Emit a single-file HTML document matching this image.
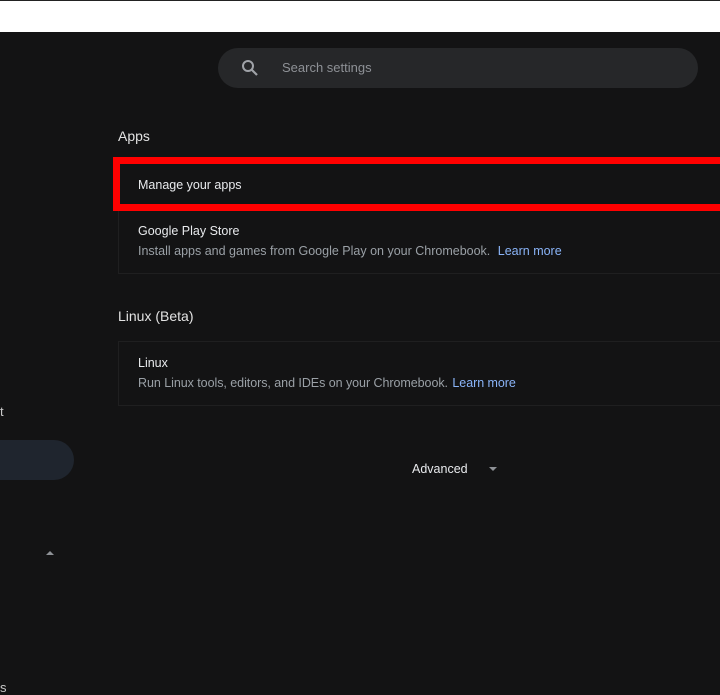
<!DOCTYPE html>
<html><head><style>
body{margin:0;width:720px;height:691px;background:#131314;font-family:"Liberation Sans",sans-serif;position:relative;overflow:hidden}
.top{position:absolute;left:0;top:0;width:720px;height:32px;background:#fff;border-top:1px solid #222;box-sizing:border-box}
.search{position:absolute;left:218px;top:48px;width:480px;height:40px;border-radius:20px;background:#262729}
.search span{position:absolute;left:64px;top:12px;font-size:13px;color:#8e9196}
.h{position:absolute;left:118px;font-size:14px;color:#e3e3e3}
.card{position:absolute;left:118px;width:620px;border:1px solid #1f1f20;border-right:none;box-sizing:border-box}
.t{position:absolute;left:138px;font-size:13px;color:#e8eaed}
.s{position:absolute;left:138px;font-size:13px;color:#9aa0a6}
.s a{color:#8ab4f8;margin-left:4px}
.red{position:absolute;left:113px;top:157px;width:620px;height:54px;border:7px solid #f00;box-sizing:border-box}
</style></head><body>
<div class="top"></div>
<div class="search"><svg style="position:absolute;left:23px;top:11px" width="18" height="18" viewBox="0 0 18 18"><circle cx="7" cy="7" r="5" fill="none" stroke="#a0a3a8" stroke-width="2"/><path d="M11 11L16 16" stroke="#a0a3a8" stroke-width="2.2"/></svg><span>Search settings</span></div>
<div class="h" style="top:128px">Apps</div>
<div class="card" style="top:157px;height:117px"></div>
<div class="red"></div>
<div class="t" style="top:178px;font-size:12.5px">Manage your apps</div>
<div class="t" style="top:224px;font-size:12.5px">Google Play Store</div>
<div class="s" style="top:244px;font-size:12.5px">Install apps and games from Google Play on your Chromebook. <a>Learn more</a></div>
<div class="h" style="top:308px">Linux (Beta)</div>
<div class="card" style="top:341px;height:65px"></div>
<div class="t" style="top:356px;font-size:12.5px">Linux</div>
<div class="s" style="top:376px;font-size:12.5px;letter-spacing:-0.05px">Run Linux tools, editors, and IDEs on your Chromebook. <a style="margin-left:1px">Learn more</a></div>
<div class="t" style="left:412px;top:462px;font-size:12.5px">Advanced</div>
<div style="position:absolute;left:489px;top:467px;width:0;height:0;border-left:4px solid transparent;border-right:4px solid transparent;border-top:4px solid #8e9196"></div>
<div style="position:absolute;left:-4px;top:440px;width:78px;height:40px;border-radius:0 20px 20px 0;background:#1f252e"></div>
<div style="position:absolute;left:0;top:404px;font-size:13px;color:#c8c8c8">t</div>
<div style="position:absolute;left:46px;top:551px;width:0;height:0;border-left:4px solid transparent;border-right:4px solid transparent;border-bottom:4px solid #8e9196"></div>
<div style="position:absolute;left:0;top:680px;font-size:13px;color:#c8c8c8">s</div>
</body></html>
